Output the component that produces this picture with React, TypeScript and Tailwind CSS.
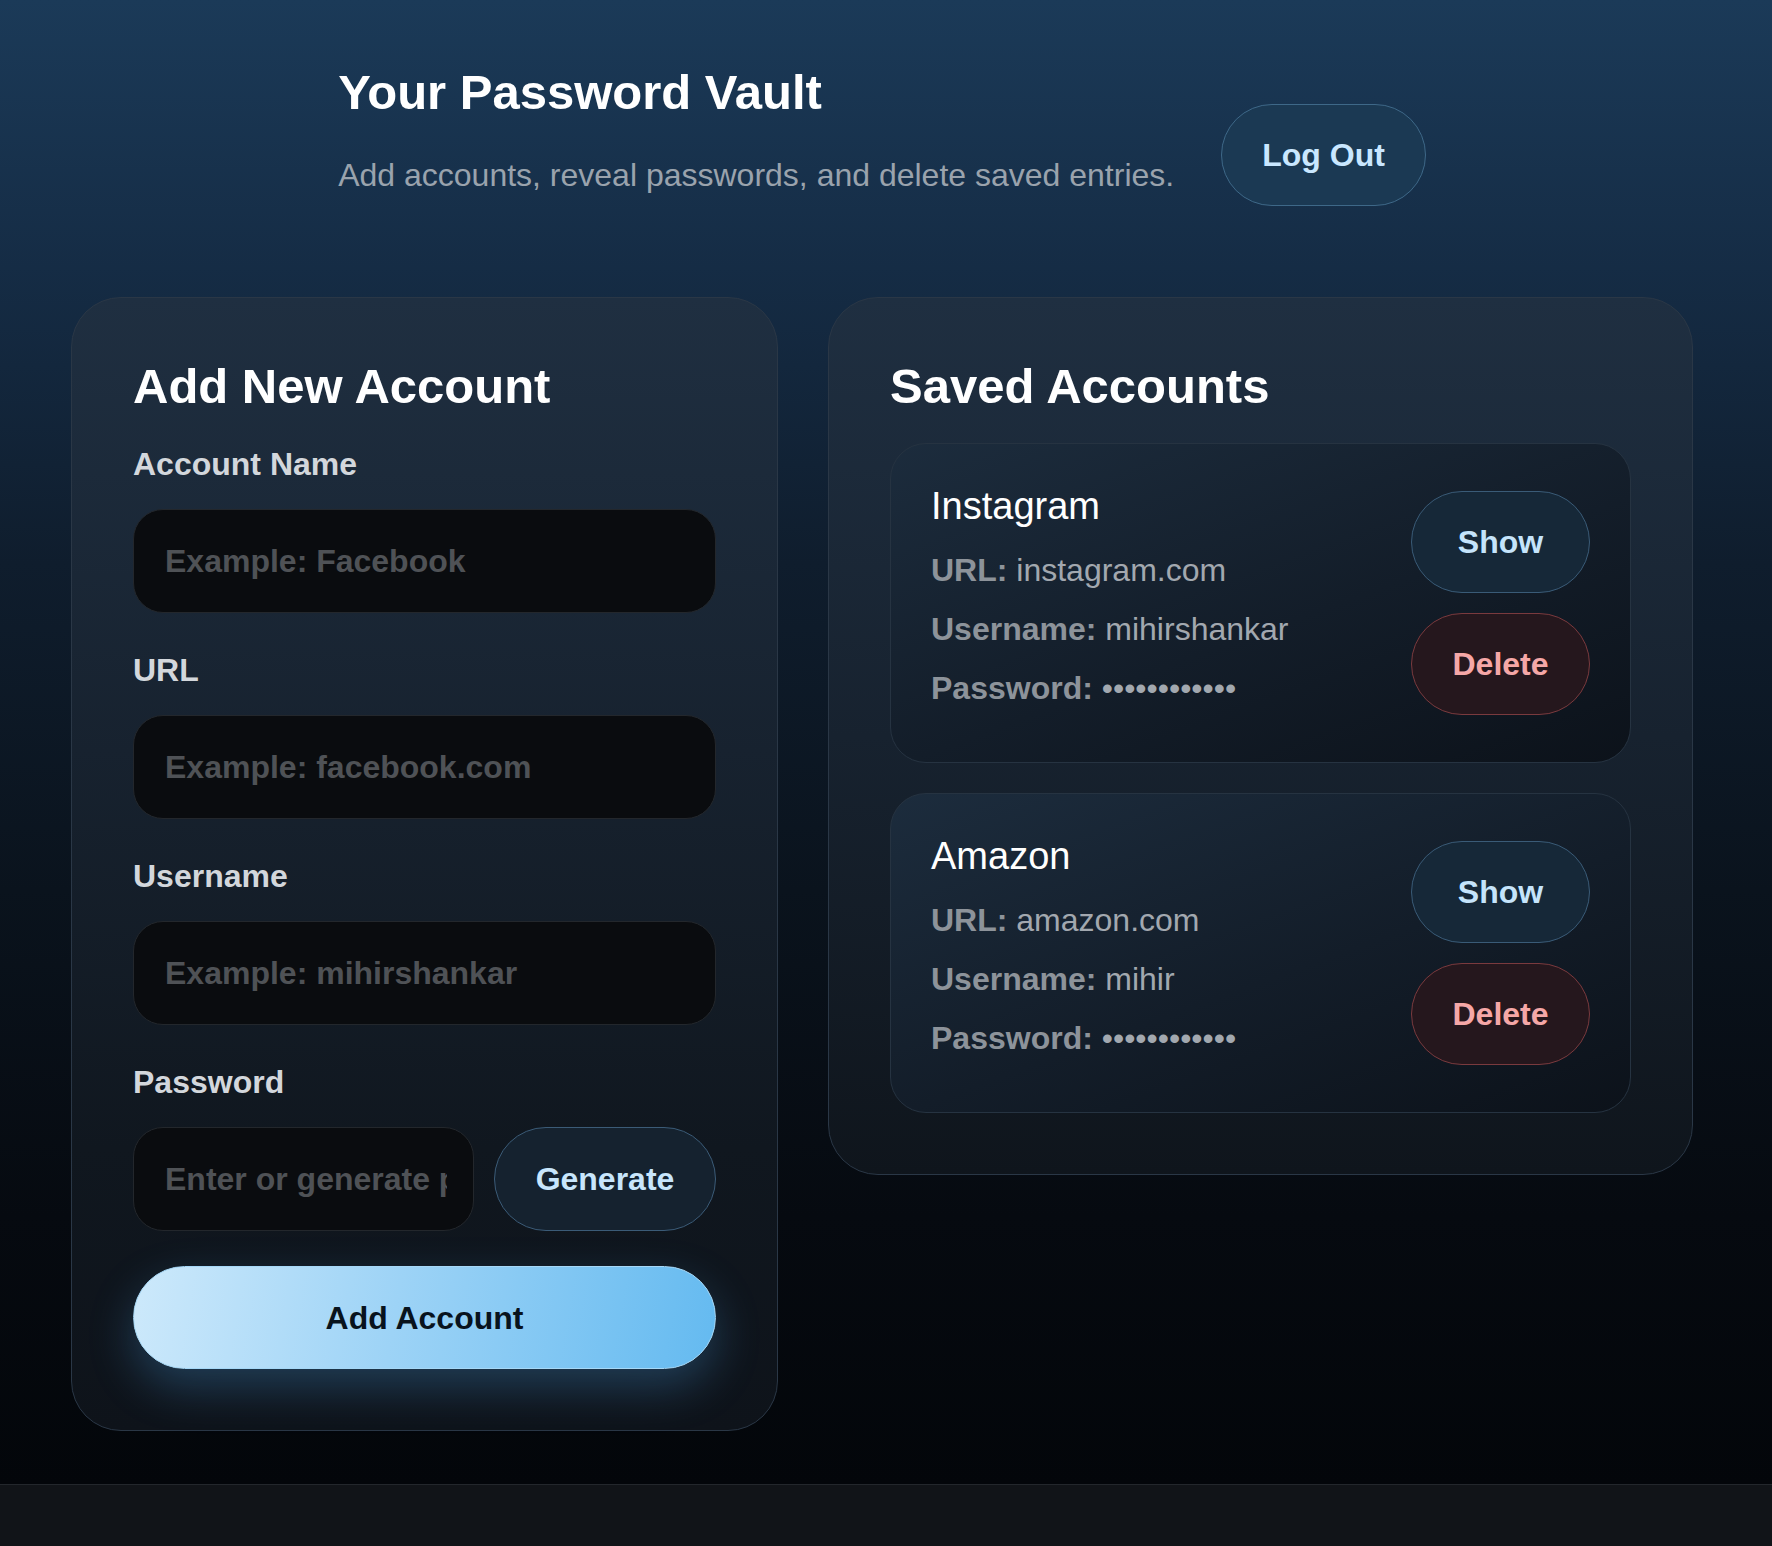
import React from "react";

type Account = { name: string; url: string; username: string };

const accounts: Account[] = [
  { name: "Instagram", url: "instagram.com", username: "mihirshankar" },
  { name: "Amazon", url: "amazon.com", username: "mihir" },
];

function Field({ label, placeholder }: { label: string; placeholder: string }) {
  return (
    <div className="mb-[39px]">
      <label className="block text-[32px] leading-[37px] font-bold text-[#d3d7dc] mb-[26px]">{label}</label>
      <input
        placeholder={placeholder}
        className="block w-full h-[104px] rounded-[30px] border border-[#23272c] bg-[#0a0c0f] px-[31px] text-[32px] font-bold text-white placeholder:text-[#4f5256] outline-none"
      />
    </div>
  );
}

function AccountCard({ a }: { a: Account }) {
  return (
    <div className="flex items-center justify-between rounded-[36px] border border-[#263341] bg-[linear-gradient(160deg,#1c2c3d_0%,#131d29_55%,#0c121a_100%)] p-[40px]">
      <div className="flex flex-col">
        <div className="text-[38px] leading-[44px] text-white mb-[24px]">{a.name}</div>
        <div className="flex flex-col gap-[22px] mb-[15px] text-[32px] leading-[37px] text-[#a2a8af]">
          <div>
            <span className="font-bold text-[#8d939a]">URL:</span> {a.url}
          </div>
          <div>
            <span className="font-bold text-[#8d939a]">Username:</span> {a.username}
          </div>
          <div>
            <span className="font-bold text-[#8d939a]">Password:</span> ••••••••••••
          </div>
        </div>
      </div>
      <div className="flex flex-col gap-[20px] w-[179px]">
        <button className="h-[102px] w-full rounded-full border border-[#3a5b77] bg-[#162838] text-[32px] font-bold text-[#c5e4fb]">
          Show
        </button>
        <button className="h-[102px] w-full rounded-full border border-[#7a3a3e] bg-[#25171d] text-[32px] font-bold text-[#f5a7a7]">
          Delete
        </button>
      </div>
    </div>
  );
}

export default function App() {
  return (
    <div className="min-h-screen flex flex-col bg-[#111418] font-['Liberation_Sans',Arial,sans-serif]">
      <main className="h-[1484px] pr-[8px] bg-[linear-gradient(180deg,#1b3a58_0%,#152c45_18%,#0f1d2d_38%,#0a131d_60%,#060a10_82%,#03060a_100%)]">
        <header className="flex justify-center items-start gap-[47px] pt-[64px]">
          <div>
            <h1 className="text-[49px] leading-[56px] font-bold text-white">Your Password Vault</h1>
            <p className="mt-[37px] text-[32px] leading-[37px] text-[#9aa3ad]">
              Add accounts, reveal passwords, and delete saved entries.
            </p>
          </div>
          <button className="mt-[40px] h-[102px] px-[40px] rounded-full border border-[#3e6888] bg-[#1b3953] text-[32px] font-bold text-[#c9e7ff]">
            Log Out
          </button>
        </header>

        <div className="flex justify-center items-start gap-[50px] mt-[91px]">
          <section className="w-[707px] rounded-[50px] border border-[#2a3746] bg-[linear-gradient(180deg,#1f2f41_0%,#17222f_40%,#10171f_75%,#0e131a_100%)] px-[61px] pt-[60px] pb-[61px]">
            <h2 className="text-[49px] leading-[56px] font-bold text-white mb-[32px]">Add New Account</h2>
            <Field label="Account Name" placeholder="Example: Facebook" />
            <Field label="URL" placeholder="Example: facebook.com" />
            <Field label="Username" placeholder="Example: mihirshankar" />
            <div className="mb-[35px]">
              <label className="block text-[32px] leading-[37px] font-bold text-[#d3d7dc] mb-[26px]">Password</label>
              <div className="flex gap-[20px]">
                <input
                  placeholder="Enter or generate password"
                  className="block min-w-0 flex-1 h-[104px] rounded-[30px] border border-[#23272c] bg-[#0a0c0f] pl-[31px] pr-[26px] text-[32px] font-bold text-white placeholder:text-[#4f5256] outline-none"
                />
                <button className="w-[222px] h-[104px] rounded-full border border-[#3b5b77] bg-[#15222f] text-[32px] font-bold text-[#c8e6fc]">
                  Generate
                </button>
              </div>
            </div>
            <button className="w-full h-[103px] rounded-full border border-[#a6d8f7] bg-[linear-gradient(100deg,#cde9fb_0%,#9dd3f6_45%,#64baf0_100%)] text-[32px] font-bold text-[#08131d] shadow-[0_18px_45px_rgba(80,170,240,0.28)]">
              Add Account
            </button>
          </section>

          <section className="w-[865px] rounded-[50px] border border-[#2a3746] bg-[linear-gradient(180deg,#1f2f41_0%,#17222f_50%,#0f151c_100%)] px-[61px] pt-[60px] pb-[61px]">
            <h2 className="text-[49px] leading-[56px] font-bold text-white mb-[29px]">Saved Accounts</h2>
            <div className="flex flex-col gap-[30px]">
              {accounts.map((a) => (
                <AccountCard key={a.name} a={a} />
              ))}
            </div>
          </section>
        </div>
      </main>
      <footer className="h-[62px] border-t border-[#23272c] bg-[#111418]" />
    </div>
  );
}
